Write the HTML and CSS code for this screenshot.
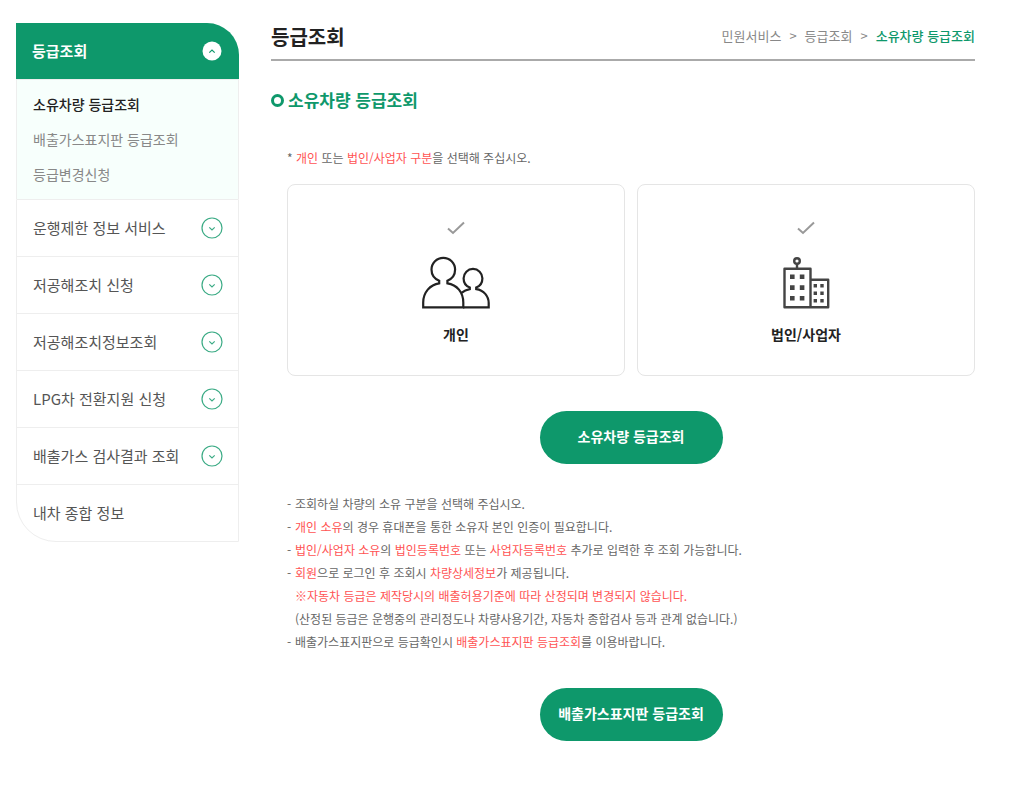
FILE: index.html
```
<!DOCTYPE html>
<html lang="ko">
<head>
  <meta charset="UTF-8">
  <meta name="viewport" content="width=device-width, initial-scale=1.0">
  <title>소유차량 등급조회</title>
  <link rel="stylesheet" href="styles.css">
</head>
<body>

<div class="container">
  <nav class="sidebar">
    <button type="button" class="menu-title">등급조회
      <svg class="toggle" viewBox="0 0 22 22"><circle cx="11" cy="11" r="9.5" fill="#fff"/><path d="M8.3 12.6 11 10l2.7 2.6" fill="none" stroke="#0e986b" stroke-width="1.2"/></svg>
    </button>
    <ul class="submenu">
      <li><a href="#" class="active">소유차량 등급조회</a></li>
      <li><a href="#">배출가스표지판 등급조회</a></li>
      <li><a href="#">등급변경신청</a></li>
    </ul>
    <ul class="menu">
      <li><button type="button">운행제한 정보 서비스
        <svg class="toggle" viewBox="0 0 22 22"><use href="#arrow-down"/></svg></button></li>
      <li><button type="button">저공해조치 신청
        <svg class="toggle" viewBox="0 0 22 22"><use href="#arrow-down"/></svg></button></li>
      <li><button type="button">저공해조치정보조회
        <svg class="toggle" viewBox="0 0 22 22"><use href="#arrow-down"/></svg></button></li>
      <li><button type="button">LPG차 전환지원 신청
        <svg class="toggle" viewBox="0 0 22 22"><use href="#arrow-down"/></svg></button></li>
      <li><button type="button">배출가스 검사결과 조회
        <svg class="toggle" viewBox="0 0 22 22"><use href="#arrow-down"/></svg></button></li>
      <li><a href="#">내차 종합 정보</a></li>
    </ul>
  </nav>

  <main class="content">
    <header class="page-header">
      <h1>등급조회</h1>
      <div class="breadcrumb">
        <a href="#">민원서비스</a><span>&gt;</span><a href="#">등급조회</a><span>&gt;</span><a href="#" class="current">소유차량 등급조회</a>
      </div>
    </header>

    <h2>소유차량 등급조회</h2>

    <div class="inner">
      <p class="guide">* <em>개인</em> 또는 <em>법인/사업자 구분</em>을 선택해 주십시오.</p>

      <div class="cards">
        <button type="button" class="card">
          <svg class="check" viewBox="0 0 18 14"><path d="M1 7.5 6 12 17 1.5"/></svg>
          <svg class="card-icon" viewBox="0 0 70 54" fill="none" stroke="#222" stroke-width="2.2">
            <path d="M18.200 27.300v-2.500C13.500 22.900 10.500 18.800 10.500 13.600a11.800 11.800 0 0 1 23.600 0c0 5.200-3 9.300-7.700 11.200v2.500C36 28.500 42.300 36.500 42.300 46.500v4.800H2.200v-4.800C2.200 36.500 9 28.500 18.200 27.300z"/>
            <path d="M40.500 36.800c2.400-2 5.200-3.200 8.300-3.700v-1.600c-4-1.400-6.200-5-6.200-9.200a9.400 9.400 0 0 1 18.800 0c0 4.200-2.200 7.800-6.200 9.200v1.600c7.600 1 12.500 7 12.500 14v4.200H42"/>
          </svg>
          <strong>개인</strong>
        </button>
        <button type="button" class="card">
          <svg class="check" viewBox="0 0 18 14"><path d="M1 7.5 6 12 17 1.5"/></svg>
          <svg class="card-icon" viewBox="0 0 70 54" fill="none" stroke="#444" stroke-width="2.4" stroke-linejoin="round">
            <circle cx="26" cy="5" r="2.8"/>
            <path d="M26 8v5M13.500 12.800h26v38.400h-26zM39.500 23.800h17.700v27.400H39.500"/>
            <path fill="#444" stroke="none" d="M19 18.500h4.600v4.600H19zM28.800 18.500h4.600v4.600h-4.600zM19 29.300h4.600v4.600H19zM28.800 29.300h4.600v4.600h-4.600zM19 40h4.600v4.600H19zM28.800 40h4.600v4.600h-4.600zM42.600 28h3.400v3.400h-3.400zM49.300 28h3.400v3.400h-3.400zM42.600 35.600h3.400v3.400h-3.400zM49.300 35.600h3.400v3.400h-3.400zM42.600 43h3.400v3.400h-3.400zM49.300 43h3.400v3.400h-3.400z"/>
          </svg>
          <strong>법인/사업자</strong>
        </button>
      </div>

      <button type="button" class="btn">소유차량 등급조회</button>

      <ul class="notice">
        <li>조회하실 차량의 소유 구분을 선택해 주십시오.</li>
        <li><em>개인 소유</em>의 경우 휴대폰을 통한 소유자 본인 인증이 필요합니다.</li>
        <li><em>법인/사업자 소유</em>의 <em>법인등록번호</em> 또는 <em>사업자등록번호</em> 추가로 입력한 후 조회 가능합니다.</li>
        <li><em>회원</em>으로 로그인 후 조회시 <em>차량상세정보</em>가 제공됩니다.
          <p><em>※자동차 등급은 제작당시의 배출허용기준에 따라 산정되며 변경되지 않습니다.</em></p>
          <p>(산정된 등급은 운행중의 관리정도나 차량사용기간, 자동차 종합검사 등과 관계 없습니다.)</p>
        </li>
        <li>배출가스표지판으로 등급확인시 <em>배출가스표지판 등급조회</em>를 이용바랍니다.</li>
      </ul>

      <button type="button" class="btn">배출가스표지판 등급조회</button>
    </div>
  </main>
</div>

<svg class="symbols">
  <symbol id="arrow-down" viewBox="0 0 22 22">
    <circle cx="11" cy="11" r="10" fill="none" stroke="#3bab85" stroke-width="1.2"/>
    <path d="M8.3 10.4 11 13l2.7-2.6" fill="none" stroke="#3bab85" stroke-width="1.2"/>
  </symbol>
</svg>

</body>
</html>
```
FILE: styles.css
```
*,
*::before {
  box-sizing: border-box;
}
body {
  margin: 0;
  font-family: "Noto Sans CJK KR", "Noto Sans", sans-serif;
  font-size: 12px;
  color: #666;
  background: #fff;
}
h1, h2, p, ul {
  margin: 0;
  padding: 0;
}
ul {
  list-style: none;
}
a {
  color: inherit;
  text-decoration: none;
}
button {
  font-family: inherit;
  cursor: pointer;
}
em {
  font-style: normal;
  color: #ff5353;
}
.symbols {
  display: none;
}
.container {
  display: flex;
  align-items: flex-start;
  gap: 32px;
  padding: 23px 41px 23px 16px;
}

/* sidebar */
.sidebar {
  flex: 0 0 223px;
}
.menu-title {
  display: flex;
  justify-content: space-between;
  align-items: center;
  width: 100%;
  height: 56px;
  padding: 0 16px 2px;
  border: none;
  border-radius: 0 32px 0 0;
  background: #0e986b;
  color: #fff;
  font-size: 15px;
  font-weight: bold;
}
.toggle {
  width: 22px;
  height: 22px;
  margin-top: 2px;
}
.submenu {
  padding: 7px 16px;
  border: 1px solid #eee;
  border-bottom: none;
  background: #f7fffc;
  font-size: 14px;
  line-height: 35px;
  color: #888;
}
.submenu .active {
  color: #222;
  font-weight: 500;
}
.menu {
  border: 1px solid #eee;
  border-radius: 0 0 0 40px;
}
.menu li + li {
  border-top: 1px solid #eee;
}
.menu button,
.menu a {
  display: flex;
  justify-content: space-between;
  align-items: center;
  width: 100%;
  height: 56px;
  padding: 0 15px 2px 16px;
  border: none;
  background: none;
  color: #555;
  font-size: 15px;
}

/* content */
.content {
  flex: 1;
  min-width: 0;
}
.page-header {
  display: flex;
  justify-content: space-between;
  align-items: flex-start;
  height: 38px;
  border-bottom: 2px solid #aaa;
}
.page-header h1 {
  font-size: 20px;
  line-height: 28px;
  color: #222;
}
.breadcrumb {
  display: flex;
  gap: 8px;
  font-size: 13px;
  line-height: 26px;
  color: #888;
}
.breadcrumb .current {
  color: #0e986b;
  font-weight: 500;
}
h2 {
  display: flex;
  align-items: center;
  gap: 4px;
  margin-top: 26px;
  font-size: 17px;
  line-height: 26px;
  color: #0e986b;
}
h2::before {
  content: "";
  width: 13px;
  height: 13px;
  border: 3px solid #0e986b;
  border-radius: 50%;
}
.inner {
  padding-left: 16px;
}
.guide {
  margin-top: 33px;
  line-height: 24px;
}
.cards {
  display: grid;
  grid-template-columns: 1fr 1fr;
  gap: 12px;
  margin-top: 14px;
}
.card {
  display: flex;
  flex-direction: column;
  align-items: center;
  padding: 36px 16px 29px;
  border: 1px solid #e5e5e5;
  border-radius: 8px;
  background: #fff;
  color: #222;
  font-size: 14px;
  line-height: 24px;
}
.check {
  width: 18px;
  height: 14px;
  fill: none;
  stroke: #999;
  stroke-width: 2;
}
.card-icon {
  width: 70px;
  height: 54px;
  margin: 21px 0 12px;
}
.btn {
  display: block;
  width: 183px;
  height: 53px;
  margin: 35px auto 0;
  padding: 0 0 3px;
  border: none;
  border-radius: 27px;
  background: #0e986b;
  color: #fff;
  font-size: 14px;
  font-weight: bold;
}
.btn:hover {
  background: #0b825b;
}
.notice {
  margin-top: 28px;
  line-height: 23px;
}
.notice li {
  padding-left: 8px;
}
.notice li::before {
  content: "-";
  display: inline-block;
  width: 8px;
  margin-left: -8px;
}
```
